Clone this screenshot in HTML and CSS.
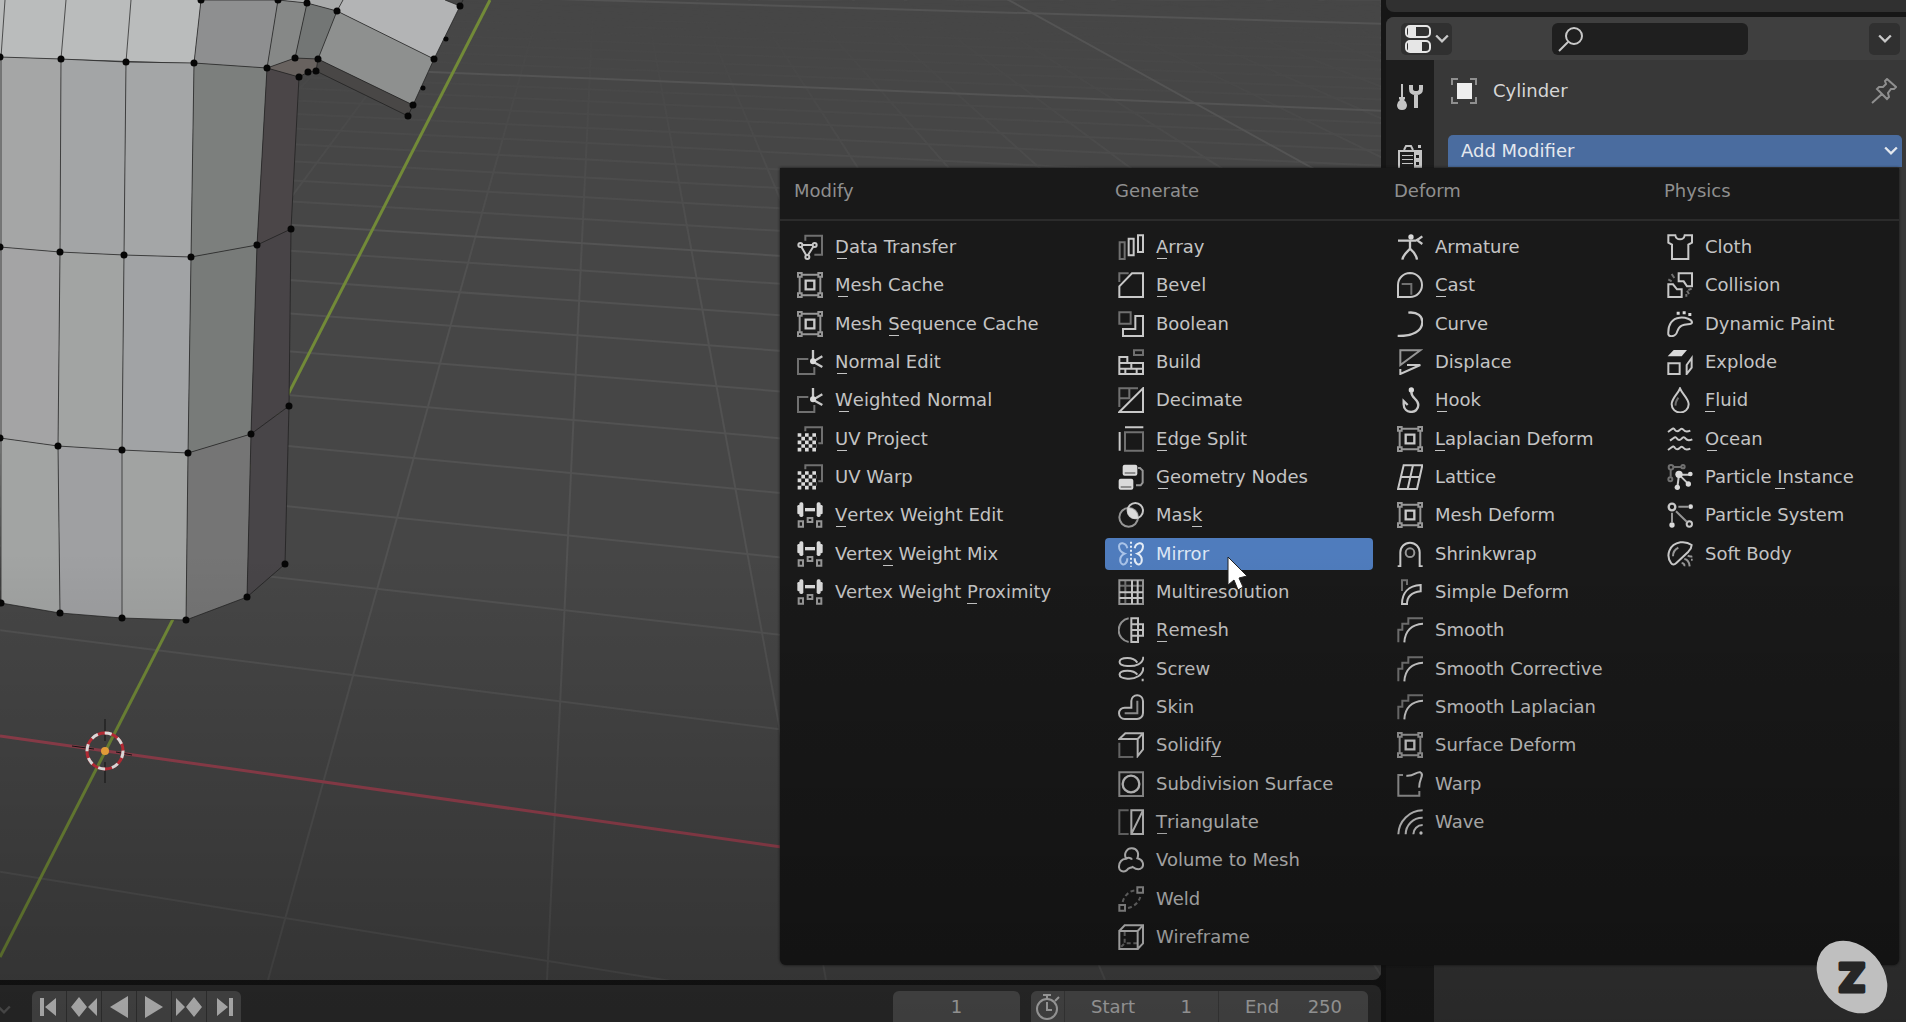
FILE: index.html
```html
<!DOCTYPE html>
<html lang="en">
<head>
<meta charset="utf-8">
<title>Cylinder – Add Modifier</title>
<link rel="stylesheet" href="styles.css">
</head>
<body>
<svg class="sprite" aria-hidden="true">
  <symbol id="data" viewBox="0 0 78 78"><path class="dim" d="M25 20V5H75V62H52"/><path d="M10 33L30 68L52 33Z"/><circle class="hole" cx="10" cy="33" r="6"/><circle class="hole" cx="53" cy="33" r="6"/><circle class="hole" cx="31" cy="69" r="6"/></symbol>
  <symbol id="cage" viewBox="0 0 78 78"><path class="mid" d="M14 8H64M14 70H64M8 14V64M70 14V64M3 3H14V14H3ZM64 3H75V14H64ZM3 64H14V75H3ZM64 64H75V75H64Z"/><path class="thick" d="M26 26H52V52H26Z"/></symbol>
  <symbol id="normal" viewBox="0 0 78 78"><path class="dim" d="M34 30H3V75H52V54"/><path class="thick" d="M48 36V3M48 38L76 22M48 38L76 54"/><circle class="solid" cx="48" cy="37" r="9"/></symbol>
  <symbol id="uv" viewBox="0 0 78 78"><path class="dim" d="M25 16V4H75V52H64"/><path class="check" d="M2 27H58M2 49H58M2 71H58"/><path class="check" d="M13 38H58M13 60H58"/></symbol>
  <symbol id="weight" viewBox="0 0 78 78"><rect class="solid" x="1" y="9" width="10" height="28" rx="4"/><rect class="solid" x="7" y="1" width="12" height="44" rx="5"/><rect class="solid" x="67" y="9" width="10" height="28" rx="4"/><rect class="solid" x="59" y="1" width="12" height="44" rx="5"/><path class="solid" d="M24 18H54V28H24Z"/><path class="mid" d="M5 58H18V74H5ZM32 48H46V60H32ZM60 58H73V74H60Z"/></symbol>
  <symbol id="array" viewBox="0 0 78 78"><path class="dim" d="M5 25H20V75H5Z"/><path d="M32 14H47V64H32ZM60 4H75V54H60Z"/></symbol>
  <symbol id="bevel" viewBox="0 0 78 78"><path class="dim" d="M4 30V4H32"/><path d="M4 75V43L42 4H75V75Z"/></symbol>
  <symbol id="boolean" viewBox="0 0 78 78"><path class="dim" d="M4 4H38V38H4Z"/><path d="M52 15H75V75H15V54H52Z"/></symbol>
  <symbol id="build" viewBox="0 0 78 78"><path class="dim" d="M48 4H75V18H48Z"/><path d="M4 24H28V42H75V75H4ZM4 42H28M4 59H75M40 42V59M22 59V75M56 59V75"/></symbol>
  <symbol id="decimate" viewBox="0 0 78 78"><path class="dim" d="M4 60V4H60M4 34H34V4"/><path d="M4 75L75 4V75Z"/></symbol>
  <symbol id="edgesplit" viewBox="0 0 78 78"><path class="dim" d="M21 19H75V74H21Z"/><path d="M5 18V74M21 4H76"/></symbol>
  <symbol id="geonodes" viewBox="0 0 78 78"><path class="mid" d="M60 12H66L74 20V56L68 64H54"/><rect class="solid" x="14" y="2" width="44" height="33" rx="6"/><rect class="solid" x="2" y="44" width="44" height="33" rx="6"/><path class="slot" d="M20 27H52M8 69H40"/></symbol>
  <symbol id="mask" viewBox="0 0 78 78"><circle class="mid" cx="32" cy="46" r="28"/><circle cx="52" cy="26" r="23"/><path class="solid" d="M31 18A28 28 0 0 1 60 47A22 22 0 0 1 31 18Z"/></symbol>
  <symbol id="mirror" viewBox="0 0 78 78"><path class="dots" d="M39 2V77"/><path class="wing" d="M28 22C24 4 3 2 3 16C3 28 8 34 20 38C8 44 4 52 8 64C14 76 28 70 28 52"/><path d="M50 22C54 4 75 2 75 16C75 28 70 34 58 38C70 44 74 52 70 64C64 76 50 70 50 52"/></symbol>
  <symbol id="multires" viewBox="0 0 78 78"><path class="dim" d="M4 20H75M22 4V75"/><path class="mid" d="M4 4H75V75H4Z"/><path d="M42 4V75M59 4V75M4 40H75M4 57H75"/></symbol>
  <symbol id="remesh" viewBox="0 0 78 78"><path class="mid" d="M32 4A36 36 0 0 0 32 75"/><path d="M40 4H60V75H40ZM40 22H75V56H40M40 39H75"/></symbol>
  <symbol id="screw" viewBox="0 0 78 78"><path d="M76 2C76 24 52 32 28 30C-4 28-2 6 28 6C44 6 54 14 58 20M76 34C76 58 52 70 28 68C-4 66-2 44 28 44C44 44 54 50 58 56M74 68V76"/></symbol>
  <symbol id="skin" viewBox="0 0 78 78"><path d="M40 21A17 17 0 0 1 75 21V57A18 18 0 0 1 57 75H20A17 17 0 0 1 20 41H40Z"/><path class="mid" d="M58 20V58H20"/></symbol>
  <symbol id="solidify" viewBox="0 0 78 78"><path class="dim" d="M4 32V75H46"/><path d="M4 21L22 4H75V52L59 72V21ZM59 21L75 4"/></symbol>
  <symbol id="subsurf" viewBox="0 0 78 78"><path class="mid" d="M4 4H75V75H4Z"/><circle class="thick" cx="39" cy="39" r="25"/></symbol>
  <symbol id="triangulate" viewBox="0 0 78 78"><path class="dim" d="M32 4H4V75H32"/><path d="M40 4H75V75H40ZM40 75L75 4"/></symbol>
  <symbol id="volume" viewBox="0 0 78 78"><path d="M24 35C16 18 28 3 42 4C58 5 64 18 58 34C76 38 78 54 72 62C62 72 52 66 44 60C34 64 32 62 26 70C14 79 2 70 3 58C4 44 12 36 24 35ZM24 35C32 30 40 33 42 38"/></symbol>
  <symbol id="weld" viewBox="0 0 78 78"><path class="mid" d="M58 4H75V20H58ZM4 57H21V74H4Z"/><path class="dim dash" d="M14 48C18 30 34 14 52 13M30 66C50 62 66 46 68 26"/></symbol>
  <symbol id="wireframe" viewBox="0 0 78 78"><path class="dim dash" d="M20 24V58H58M18 60L6 72"/><path d="M4 21H59V75H4ZM4 21L20 4H75V58L59 75M59 21L75 4"/></symbol>
  <symbol id="armature" viewBox="0 0 78 78"><circle class="solid" cx="42" cy="9" r="8"/><path class="thick" d="M3 20H56L66 14L76 7M62 20L76 30M39 22V44M39 44C34 50 18 62 16 77M39 44C46 50 58 62 60 77"/></symbol>
  <symbol id="cast" viewBox="0 0 78 78"><path d="M39 3A36 36 0 0 1 39 75H3V39A36 36 0 0 1 39 3Z"/><path class="dim" d="M14 36H43V68"/></symbol>
  <symbol id="curve" viewBox="0 0 78 78"><path class="thick" d="M34 5C62 2 77 16 76 34C75 60 48 76 2 75"/></symbol>
  <symbol id="displace" viewBox="0 0 78 78"><path class="mid" d="M10 48V4H70Z"/><path d="M30 48H70L10 75V60"/></symbol>
  <symbol id="hook" viewBox="0 0 78 78"><circle class="solid" cx="43" cy="9" r="8"/><path class="thick" d="M43 14C42 34 64 36 64 54C64 82 20 82 20 52V42L32 54"/></symbol>
  <symbol id="lattice" viewBox="0 0 78 78"><path d="M20 4H76L60 75H3ZM48 4L32 75M12 39H68"/></symbol>
  <symbol id="shrinkwrap" viewBox="0 0 78 78"><path d="M2 76H10V34A29 29 0 0 1 68 34V76H77"/><circle class="mid" cx="39" cy="35" r="13"/></symbol>
  <symbol id="simpledeform" viewBox="0 0 78 78"><path class="dim" d="M15 36V4H30V18"/><path d="M15 75H30C30 54 44 40 71 37V18C34 20 15 42 15 75Z"/></symbol>
  <symbol id="smooth" viewBox="0 0 78 78"><path class="dim" d="M4 76V38H16V20H34V4H78"/><path d="M22 76C24 42 44 22 78 20"/></symbol>
  <symbol id="warp" viewBox="0 0 78 78"><path class="mid" d="M18 12H4V74H67V60"/><path d="M28 14C52 16 56 2 70 4C84 10 64 28 67 50"/></symbol>
  <symbol id="wave" viewBox="0 0 78 78"><path d="M4 76A74 74 0 0 1 77 4M26 76A50 50 0 0 1 77 26M49 76A28 28 0 0 1 77 48"/><circle class="solid" cx="72" cy="72" r="5"/></symbol>
  <symbol id="cloth" viewBox="0 0 78 78"><path d="M4 4H25C28 20 50 20 53 4H75V26L64 32V75H15V32L4 26Z"/></symbol>
  <symbol id="collision" viewBox="0 0 78 78"><path d="M35 4H75V43H60L50 28H35ZM4 75V37H18L30 52H44V75Z"/><path class="dim" d="M4 22L14 28M14 6L22 18M60 56L66 66M74 50L64 54M58 66V74"/></symbol>
  <symbol id="dynpaint" viewBox="0 0 78 78"><path class="solid" d="M29 2H38V11H29ZM47 1H56V10H47ZM64 6H73V15H64Z"/><path d="M4 70C2 40 16 22 38 20C56 18 75 26 75 34C74 44 58 36 44 44C24 54 38 72 14 76Q6 76 4 70Z"/></symbol>
  <symbol id="explode" viewBox="0 0 78 78"><path class="solid" d="M2 22L20 3H60L44 22Z"/><path d="M4 43H38V75H4ZM59 48L74 27V56L59 75Z"/></symbol>
  <symbol id="fluid" viewBox="0 0 78 78"><path d="M39 4C32 22 14 34 14 52A25 24 0 0 0 65 52C65 34 46 22 39 4Z"/><path class="dim" d="M26 56C24 46 30 38 34 32"/></symbol>
  <symbol id="ocean" viewBox="0 0 78 78"><path d="M3 18L14 10Q20 4 24 12Q30 20 38 12Q44 4 50 12Q56 20 70 14M9 44L20 36Q26 30 30 38Q36 46 44 38Q50 30 56 38Q62 46 76 40M3 72L14 64Q20 58 24 66Q30 74 38 66Q44 58 50 66Q56 74 70 68"/></symbol>
  <symbol id="pinst" viewBox="0 0 78 78"><circle class="dim" cx="12" cy="10" r="7"/><circle class="dim" cx="48" cy="8" r="5"/><circle class="dim" cx="10" cy="46" r="6"/><path class="dim" d="M20 9H42M11 18V38"/><path d="M36 32H72M36 32L66 62M36 32L31 70"/><circle class="solid" cx="36" cy="31" r="11"/><circle class="solid" cx="70" cy="30" r="7"/><circle class="solid" cx="64" cy="60" r="8"/><circle class="solid" cx="31" cy="70" r="8"/></symbol>
  <symbol id="psys" viewBox="0 0 78 78"><circle class="thick" cx="15" cy="15" r="10"/><circle class="solid" cx="71" cy="14" r="7"/><circle class="solid" cx="15" cy="69" r="8"/><circle cx="67" cy="66" r="8"/><path class="mid" d="M34 14H64M15 32V62M27 28L60 60"/></symbol>
  <symbol id="softbody" viewBox="0 0 78 78"><path d="M12 66C-4 44 6 10 40 4C54 2 66 6 74 12C74 20 70 26 64 32L28 66C22 72 16 72 12 66Z"/><path class="mid" d="M18 46C18 32 26 24 34 20M44 66Q54 68 52 76M52 54Q66 56 68 76M62 44Q70 48 76 46M72 56H77"/></symbol>
  <symbol id="chev" viewBox="0 0 12 12"><path d="M1 3L6 8L11 3"/></symbol>
</svg>

<div class="app">
  <div class="workspace">
    <main class="viewport">
      <svg class="scene" viewBox="0 0 1381 980" preserveAspectRatio="xMinYMin slice" role="img" aria-label="3D viewport">
        <defs>
          <linearGradient id="fade" x1="0" y1="0" x2="0" y2="1"><stop offset="0" stop-color="#fff" stop-opacity="0"/><stop offset=".1" stop-color="#fff" stop-opacity=".25"/><stop offset=".3" stop-color="#fff"/></linearGradient>
          <mask id="far" maskUnits="userSpaceOnUse" x="0" y="0" width="1381" height="980"><rect width="1381" height="980" fill="url(#fade)"/></mask>
        </defs>
        <g id="minor" class="grid-minor" mask="url(#far)"></g>
        <g id="major" class="grid-major"></g>
        <path class="axis-y" d="M490 0L0 957"/>
        <path class="axis-x" d="M0 736L1381 932"/>
        <g class="faces">
          <path fill="#babcbc" d="M0 0H201L194 63L0 57Z"/>
          <path fill="#a9abab" d="M278 0H343L337 11L307 3Z"/>
          <path fill="#8e8f90" d="M201 0H278L267 68L194 63Z"/>
          <path fill="#868887" d="M278 0L307 3L295 58L267 68Z"/>
          <path fill="#737675" d="M307 3L337 11L318 59L295 58Z"/>
          <path fill="#b3b4b5" d="M343 0H445L460 6L434 59L337 11Z"/>
          <path fill="#8e908f" d="M337 11L434 59L413 105L318 59Z"/>
          <path fill="#494746" d="M318 59L413 105L408 116L316 71Z"/>
          <path fill="#68625f" d="M267 68L295 58L318 59L316 71L308 72L299 77Z"/>
          <path fill="#a5a6a6" d="M0 57L61 59L60 252L0 247Z"/>
          <path fill="#a3a5a6" d="M61 59L126 62L124 255L60 252Z"/>
          <path fill="#a4a6a7" d="M126 62L194 63L191 257L124 255Z"/>
          <path fill="#7c7f7d" d="M194 63L267 68L257 245L191 257Z"/>
          <path fill="#4b4648" d="M267 68L299 77L291 229L257 245Z"/>
          <path fill="#a4a4a5" d="M0 247L60 252L58 446L0 438Z"/>
          <path fill="#a2a4a3" d="M60 252L124 255L122 450L58 446Z"/>
          <path fill="#a1a3a5" d="M124 255L191 257L188 453L122 450Z"/>
          <path fill="#787b79" d="M191 257L257 245L251 434L188 453Z"/>
          <path fill="#484447" d="M257 245L291 229L289 406L251 434Z"/>
          <path fill="#a2a4a3" d="M0 438L58 446L60 613L1 603Z"/>
          <path fill="#9fa0a2" d="M58 446L122 450L122 618L60 613Z"/>
          <path fill="#a1a3a2" d="M122 450L188 453L186 620L122 618Z"/>
          <path fill="#757575" d="M188 453L251 434L247 597L186 620Z"/>
          <path fill="#484548" d="M251 434L289 406L285 564L247 597Z"/>
        </g>
        <path class="edges" d="M5 0L1 57V603M66 0L61 59L60 252L58 446L60 613M131 0L126 62L124 255L122 450V618M201 0L194 63L191 257L188 453L186 620M278 0L267 68L257 245L251 434L247 597M307 3L295 58M337 11L318 59L316 71M299 77L291 229L289 406L285 564M0 57L61 59L126 62L194 63L267 68L299 77M0 247L60 252L124 255L191 257L257 245L291 229M0 438L58 446L122 450L188 453L251 434L289 406M1 603L60 613L122 618L186 620L247 597L285 564M201 0H278L307 3L337 11L434 59M267 68L295 58L318 59L413 105M299 77L308 72L316 71L408 116L413 105L434 59L460 6L445 0M337 11L343 0M460 6L463 0"/>
        <path class="verts" d="M201 0h0M278 0h0M307 3h0M337 11h0M0 57h0M61 59h0M126 62h0M194 63h0M267 68h0M295 58h0M318 59h0M308 72h0M316 71h0M299 77h0M434 59h0M413 105h0M408 116h0M460 6h0M0 247h0M60 252h0M124 255h0M191 257h0M257 245h0M291 229h0M0 438h0M58 446h0M122 450h0M188 453h0M251 434h0M289 406h0M1 603h0M60 613h0M122 618h0M186 620h0M247 597h0M285 564h0"/>
        <path class="verts small" d="M446 39h0M423 88h0"/>
        <path class="cross" d="M105 719V741M105 762V783M72 746L94 749M116 752L132 755"/>
        <circle class="ring" cx="105" cy="751" r="18"/>
        <circle class="ring ring-dash" cx="105" cy="751" r="18"/>
        <circle class="origin" cx="105" cy="751" r="4"/>
      </svg>
    </main>
    <footer class="timeline">
      <svg class="chev faint"><use href="#chev"/></svg>
      <div class="group transport">
        <button aria-label="Jump to start"><svg viewBox="0 0 28 22"><path d="M5 2h4v18H5zM21 2v18L10 11z"/></svg></button>
        <button aria-label="Previous keyframe"><svg viewBox="0 0 28 22"><path d="M9 1l8 10l-8 10l-8-10zM27 2v18l-9-9z"/></svg></button>
        <button aria-label="Play backwards"><svg viewBox="0 0 28 22"><path d="M23 0v22L5 11z"/></svg></button>
        <button aria-label="Play"><svg viewBox="0 0 28 22"><path d="M5 0v22L23 11z"/></svg></button>
        <button aria-label="Next keyframe"><svg viewBox="0 0 28 22"><path d="M19 1l8 10l-8 10l-8-10zM1 2v18l9-9z"/></svg></button>
        <button aria-label="Jump to end"><svg viewBox="0 0 28 22"><path d="M19 2h4v18h-4zM7 2v18l11-9z"/></svg></button>
      </div>
      <input class="group frame" aria-label="Current frame" value="1">
      <div class="group range">
        <button class="preview" aria-label="Use preview range"><svg viewBox="0 0 26 28"><circle cx="12" cy="16" r="10"/><path d="M12 9v8h5M12 6V2M8 2h8M20 8l4-4"/></svg></button>
        <label class="field start">Start<input value="1"></label>
        <label class="field end">End<input value="250"></label>
      </div>
    </footer>
  </div>

  <aside class="side">
    <div class="outliner"></div>
    <section class="props">
      <header class="props-head">
        <button class="editor" aria-label="Editor type">
          <svg class="toggles" viewBox="0 0 26 28"><rect x="1" y="1" width="24" height="11" rx="4"/><rect x="1" y="16" width="24" height="11" rx="4"/><path d="M3 2h8v9H3zM3 17h14v9H3z"/></svg>
          <svg class="chev"><use href="#chev"/></svg>
        </button>
        <label class="search"><svg viewBox="0 0 26 26"><circle cx="16" cy="10" r="8"/><path d="M10 16L1 25"/></svg><input aria-label="Search"></label>
        <button class="opts" aria-label="Options"><svg class="chev"><use href="#chev"/></svg></button>
      </header>
      <div class="props-body">
        <nav class="tabs">
          <button aria-label="Tool"><svg viewBox="0 0 26 26"><path class="ln" d="M5 0v14"/><path d="M2 13h6v2l-1 1q3 2 3 5q0 5-5 5t-5-5q0-3 3-5l-1-1z"/><path class="wrench" d="M14 1v4q0 4 5 4t5-4V1M19 9v15"/></svg></button>
          <button aria-label="Render"><svg viewBox="0 0 26 26"><path class="ln" d="M2 7h22v18H2zM7 6l2-4h5l2 4"/><path d="M17 8h7v17h-7zM5 11h11v1H5zM5 15h11v1H5zM5 19h11v1H5zM21 1h3v3h-3z"/><path class="knob" d="M19 11h3v3h-3zM19 18h3v3h-3z"/></svg></button>
        </nav>
        <div class="panel">
          <div class="crumb">
            <svg viewBox="0 0 26 26"><path class="box" d="M6 5h15v16H6z"/><path d="M1 7V1h6M19 1h6v6M25 19v6h-6M7 25H1v-6"/></svg>
            <span>Cylinder</span>
            <button class="pin" aria-label="Pin"><svg viewBox="0 0 26 26"><path d="M16 1L25 9L23 11L20 11L17 15L18 19L16 21L6 11L8 9L12 9L15 6L14 3ZM11 16L1 25"/></svg></button>
          </div>
          <button class="add">Add Modifier<svg class="chev"><use href="#chev"/></svg></button>
        </div>
      </div>
    </section>
  </aside>
</div>

<div class="menu" role="menu" aria-label="Add Modifier">
  <div class="cols heads"><h2>Modify</h2><h2>Generate</h2><h2>Deform</h2><h2>Physics</h2></div>
  <div class="cols lists">
    <div class="list">
      <button><svg><use href="#data"/></svg><span><u>D</u>ata Transfer</span></button>
      <button><svg><use href="#cage"/></svg><span><u>M</u>esh Cache</span></button>
      <button><svg><use href="#cage"/></svg><span>Mesh <u>S</u>equence Cache</span></button>
      <button><svg><use href="#normal"/></svg><span><u>N</u>ormal Edit</span></button>
      <button><svg><use href="#normal"/></svg><span><u>W</u>eighted Normal</span></button>
      <button><svg><use href="#uv"/></svg><span><u>U</u>V Project</span></button>
      <button><svg><use href="#uv"/></svg><span>UV Warp</span></button>
      <button><svg><use href="#weight"/></svg><span><u>V</u>ertex Weight Edit</span></button>
      <button><svg><use href="#weight"/></svg><span>Verte<u>x</u> Weight Mix</span></button>
      <button><svg><use href="#weight"/></svg><span>Vertex Weight <u>P</u>roximity</span></button>
    </div>
    <div class="list">
      <button><svg><use href="#array"/></svg><span><u>A</u>rray</span></button>
      <button><svg><use href="#bevel"/></svg><span><u>B</u>evel</span></button>
      <button><svg><use href="#boolean"/></svg><span>Boolean</span></button>
      <button><svg><use href="#build"/></svg><span>Build</span></button>
      <button><svg><use href="#decimate"/></svg><span>Decimate</span></button>
      <button><svg><use href="#edgesplit"/></svg><span><u>E</u>dge Split</span></button>
      <button><svg><use href="#geonodes"/></svg><span><u>G</u>eometry Nodes</span></button>
      <button><svg><use href="#mask"/></svg><span>Mas<u>k</u></span></button>
      <button class="active"><svg><use href="#mirror"/></svg><span>Mirror</span></button>
      <button><svg><use href="#multires"/></svg><span>Multiresolution</span></button>
      <button><svg><use href="#remesh"/></svg><span><u>R</u>emesh</span></button>
      <button><svg><use href="#screw"/></svg><span>Screw</span></button>
      <button><svg><use href="#skin"/></svg><span>Skin</span></button>
      <button><svg><use href="#solidify"/></svg><span>Solidif<u>y</u></span></button>
      <button><svg><use href="#subsurf"/></svg><span>Subdivision Surface</span></button>
      <button><svg><use href="#triangulate"/></svg><span><u>T</u>riangulate</span></button>
      <button><svg><use href="#volume"/></svg><span>Volume to Mesh</span></button>
      <button><svg><use href="#weld"/></svg><span>Weld</span></button>
      <button><svg><use href="#wireframe"/></svg><span>Wireframe</span></button>
    </div>
    <div class="list">
      <button><svg><use href="#armature"/></svg><span>Armature</span></button>
      <button><svg><use href="#cast"/></svg><span><u>C</u>ast</span></button>
      <button><svg><use href="#curve"/></svg><span>Curve</span></button>
      <button><svg><use href="#displace"/></svg><span>Displace</span></button>
      <button><svg><use href="#hook"/></svg><span><u>H</u>ook</span></button>
      <button><svg><use href="#cage"/></svg><span><u>L</u>aplacian Deform</span></button>
      <button><svg><use href="#lattice"/></svg><span>Lattice</span></button>
      <button><svg><use href="#cage"/></svg><span>Mesh Deform</span></button>
      <button><svg><use href="#shrinkwrap"/></svg><span>Shrinkwrap</span></button>
      <button><svg><use href="#simpledeform"/></svg><span>Simple Deform</span></button>
      <button><svg><use href="#smooth"/></svg><span>Smooth</span></button>
      <button><svg><use href="#smooth"/></svg><span>Smooth Corrective</span></button>
      <button><svg><use href="#smooth"/></svg><span>Smooth Laplacian</span></button>
      <button><svg><use href="#cage"/></svg><span>Surface Deform</span></button>
      <button><svg><use href="#warp"/></svg><span>Warp</span></button>
      <button><svg><use href="#wave"/></svg><span>Wave</span></button>
    </div>
    <div class="list">
      <button><svg><use href="#cloth"/></svg><span>Cloth</span></button>
      <button><svg><use href="#collision"/></svg><span>Collision</span></button>
      <button><svg><use href="#dynpaint"/></svg><span>Dynamic Paint</span></button>
      <button><svg><use href="#explode"/></svg><span>Explode</span></button>
      <button><svg><use href="#fluid"/></svg><span><u>F</u>luid</span></button>
      <button><svg><use href="#ocean"/></svg><span><u>O</u>cean</span></button>
      <button><svg><use href="#pinst"/></svg><span>Particle <u>I</u>nstance</span></button>
      <button><svg><use href="#psys"/></svg><span>Particle System</span></button>
      <button><svg><use href="#softbody"/></svg><span>Soft Body</span></button>
    </div>
  </div>
</div>

<div class="shade"></div>
<svg class="pointer" viewBox="0 0 22 36" aria-hidden="true"><path d="M2 1V29L8 24L12 34L17 31L13 22L21 20Z"/></svg>
<svg class="badge" viewBox="0 0 72 72" role="img" aria-label="Z"><ellipse cx="36" cy="36" rx="40" ry="31" transform="rotate(48 36 36)"/><text x="36" y="51" text-anchor="middle">Z</text></svg>
<script src="grid.js"></script>
</body>
</html>
```
FILE: styles.css
```css
* { box-sizing: border-box; }

body {
  margin: 0;
  height: 100vh;
  overflow: hidden;
  position: relative;
  background: #161616;
  color: #c4c4c4;
  font: 18px/24px "DejaVu Sans", sans-serif;
}

button, input {
  margin: 0;
  padding: 0;
  border: 0;
  background: none;
  color: inherit;
  font: inherit;
  outline: 0;
}

svg { display: block; fill: none; stroke: #c8c8c8; }
.sprite { position: absolute; width: 0; height: 0; }
.chev { width: 14px; height: 14px; stroke-width: 2; flex: none; }

.app { display: grid; grid-template-columns: 1fr 520px; gap: 5px; height: 100%; }

/* left: 3D viewport and timeline */
.workspace { display: flex; flex-direction: column; gap: 5px; min-width: 0; }
.viewport { flex: 1; min-height: 0; background: #464646; border-radius: 0 0 8px 0; overflow: hidden; }
.scene { width: 100%; height: 100%; }
.grid-minor { stroke: #525252; stroke-width: 2; }
.grid-major { stroke: #545454; stroke-width: 2; }
.axis-y { stroke: #728a38; stroke-width: 3; }
.axis-x { stroke: #96414f; stroke-width: 3; }
.faces { stroke: none; }
.edges { stroke: #1c1c1c; stroke-opacity: .7; stroke-width: 1; }
.verts { stroke: #060606; stroke-width: 7; stroke-linecap: round; }
.small { stroke-width: 5; }
.cross { stroke: #151515; stroke-width: 1; }
.ring { stroke: #c92f3a; stroke-width: 3; }
.ring-dash { stroke: #f4f4f4; stroke-dasharray: 7 7; }
.origin { fill: #ffb040; stroke: none; }

.timeline {
  height: 37px;
  display: flex;
  align-items: stretch;
  padding: 6px 13px 0 0;
  background: #303030;
  border-radius: 0 8px 0 0;
}
.timeline .faint { margin: 12px 21px 0 -3px; opacity: .3; }
.group { background: #545454; border-radius: 6px 6px 0 0; overflow: hidden; }
.transport { display: flex; gap: 1px; background: #3a3a3a; margin-right: auto; }
.transport button { width: 34px; display: grid; place-items: center; background: #545454; }
.transport svg { width: 28px; height: 22px; fill: #dedede; stroke: none; }
.frame { width: 127px; text-align: center; margin-right: 11px; }
.range { display: flex; gap: 1px; background: #424242; }
.range > * { background: #545454; }
.preview { width: 33px; display: grid; place-items: center; }
.preview svg { width: 26px; height: 28px; stroke-width: 2; }
.field { display: flex; align-items: center; padding: 0 26px; }
.field input { flex: 1; width: 0; text-align: right; }
.start { width: 153px; }
.end { width: 149px; }

/* right: outliner edge and properties editor */
.side { display: flex; flex-direction: column; gap: 5px; }
.outliner { height: 12px; background: #303030; border-radius: 0 0 0 8px; }
.props { flex: 1; display: flex; flex-direction: column; background: #383838; border-radius: 8px 0 0 0; overflow: hidden; }
.props-head { height: 43px; display: flex; align-items: center; justify-content: space-between; padding: 0 6px 0 15px; background: #3f3f3f; }
.editor, .opts { height: 32px; display: flex; align-items: center; justify-content: center; gap: 4px; background: #303030; border-radius: 5px; }
.editor { width: 51px; }
.opts { width: 31px; }
.toggles { width: 26px; height: 28px; stroke: #e6e6e6; stroke-width: 2; }
.toggles path { fill: #e6e6e6; stroke: none; }
.search { width: 196px; height: 32px; display: flex; align-items: center; gap: 6px; padding: 0 6px; margin-left: -22px; background: #1f1f1f; border-radius: 6px; }
.search svg { width: 26px; height: 26px; flex: none; stroke-width: 2; }
.search input { flex: 1; width: 0; }
.props-body { flex: 1; display: flex; }
.tabs { width: 48px; display: flex; flex-direction: column; align-items: center; gap: 34px; padding-top: 24px; background: #1d1d1d; }
.tabs svg { width: 26px; height: 26px; fill: #c4c4c4; stroke: none; }
.tabs .ln { fill: none; stroke: #c4c4c4; stroke-width: 2; }
.tabs .wrench { fill: none; stroke: #c4c4c4; stroke-width: 4; }
.tabs .knob { fill: #1d1d1d; }
.panel { flex: 1; padding: 12px 4px 0 14px; }
.crumb { height: 38px; display: flex; align-items: center; gap: 16px; padding: 0 5px 0 3px; color: #d6d6d6; }
.crumb svg { width: 26px; height: 26px; stroke: #8f8f8f; stroke-width: 2; }
.crumb .box { fill: #eee; stroke: none; }
.pin { margin-left: auto; }
.add { width: 100%; height: 32px; margin-top: 25px; padding: 0 4px 0 13px; display: flex; align-items: center; justify-content: space-between; background: #4a6c9f; border-radius: 5px 5px 0 0; color: #e4e8ee; }
.add svg { stroke: #e4e8ee; }

/* modifier menu, opened over the editors */
.menu {
  position: absolute;
  top: 168px;
  right: 7px;
  bottom: 57px;
  width: 1119px;
  display: flex;
  flex-direction: column;
  background: #191919;
  border-radius: 0 0 6px 6px;
  box-shadow: 0 0 3px #111;
}
.cols { display: grid; grid-template-columns: 310px 268px 259px 1fr; column-gap: 11px; padding: 0 10px 0 4px; }
.heads { height: 53px; align-items: center; padding-bottom: 6px; border-bottom: 2px solid #2b2b2b; }
.heads h2 { margin: 0; padding-left: 10px; font-size: 18px; font-weight: 400; color: #8f8f8f; }
.lists { flex: 1; padding-top: 7px; padding-bottom: 9px; }
.list { display: grid; grid-template-rows: repeat(19, 1fr); align-items: center; }
.list button { height: 32px; display: flex; align-items: center; gap: 12px; padding: 0 13px; border-radius: 4px; color: #c4c4c4; text-align: left; white-space: nowrap; }
.list svg { width: 26px; height: 26px; flex: none; stroke-width: 6; }
.list .active { background: #4f7cbd; color: #dce6f4; }
.list .active svg { stroke: #e4ecf6; }
u { position: relative; text-decoration: none; }
u::after { content: ""; position: absolute; left: 50%; bottom: -2px; width: 10px; height: 1px; margin-left: -5px; background: currentColor; }
.dim { stroke: #707070; }
.mid { stroke: #969696; }
.thick { stroke-width: 7; }
.solid { fill: #dadada; stroke: none; }
.hole { fill: #191919; }
.slot { stroke: #777; stroke-width: 4; }
.check { stroke: #dadada; stroke-width: 11; stroke-dasharray: 11 11; }
.dash { stroke-dasharray: 12 8; }
.dots { stroke-dasharray: 6 6; }
.wing { stroke: #a9c3e8; }

/* the screen darkens toward its lower edge */
.shade { position: absolute; inset: 0; pointer-events: none; background: linear-gradient(transparent 54%, rgba(0, 0, 0, .28)); }
.pointer { position: absolute; left: 1226px; top: 556px; width: 22px; height: 36px; fill: #fff; stroke: #222; stroke-width: 1; }
.badge { position: absolute; right: 18px; bottom: 9px; width: 72px; height: 72px; overflow: visible; stroke: none; }
.badge ellipse { fill: #bfbfbf; }
.badge text { fill: #262626; stroke: #262626; stroke-width: 3; stroke-linejoin: round; font: 900 40px Inter, sans-serif; }
```
FILE: grid.js
```js
// Floor grid in perspective: each family of lines meets at its own vanishing point.
const NS = "http://www.w3.org/2000/svg";
const minor = document.getElementById("minor");
const major = document.getElementById("major");

function line(parent, x1, y1, x2, y2) {
  const el = document.createElementNS(NS, "path");
  el.setAttribute("d", `M${x1} ${y1}L${x2} ${y2}`);
  parent.appendChild(el);
}

const depth = { x: 604, y: -224 };
for (let n = -3; n <= 32; n++) {
  if (n === 0) continue;
  line(n % 10 ? minor : major, depth.x, depth.y, -11 + 279 * n, 980);
}

const side = { x: -6700, y: -220 };
for (let k = -2; k <= 38; k++) {
  if (k === 0) continue;
  const drop = 1 / (0.001046 + 0.00013 * k);
  const y = side.y + drop;
  line(k % 10 ? minor : major, 0, y, 1400, y + 1400 * drop / -side.x);
}
```
